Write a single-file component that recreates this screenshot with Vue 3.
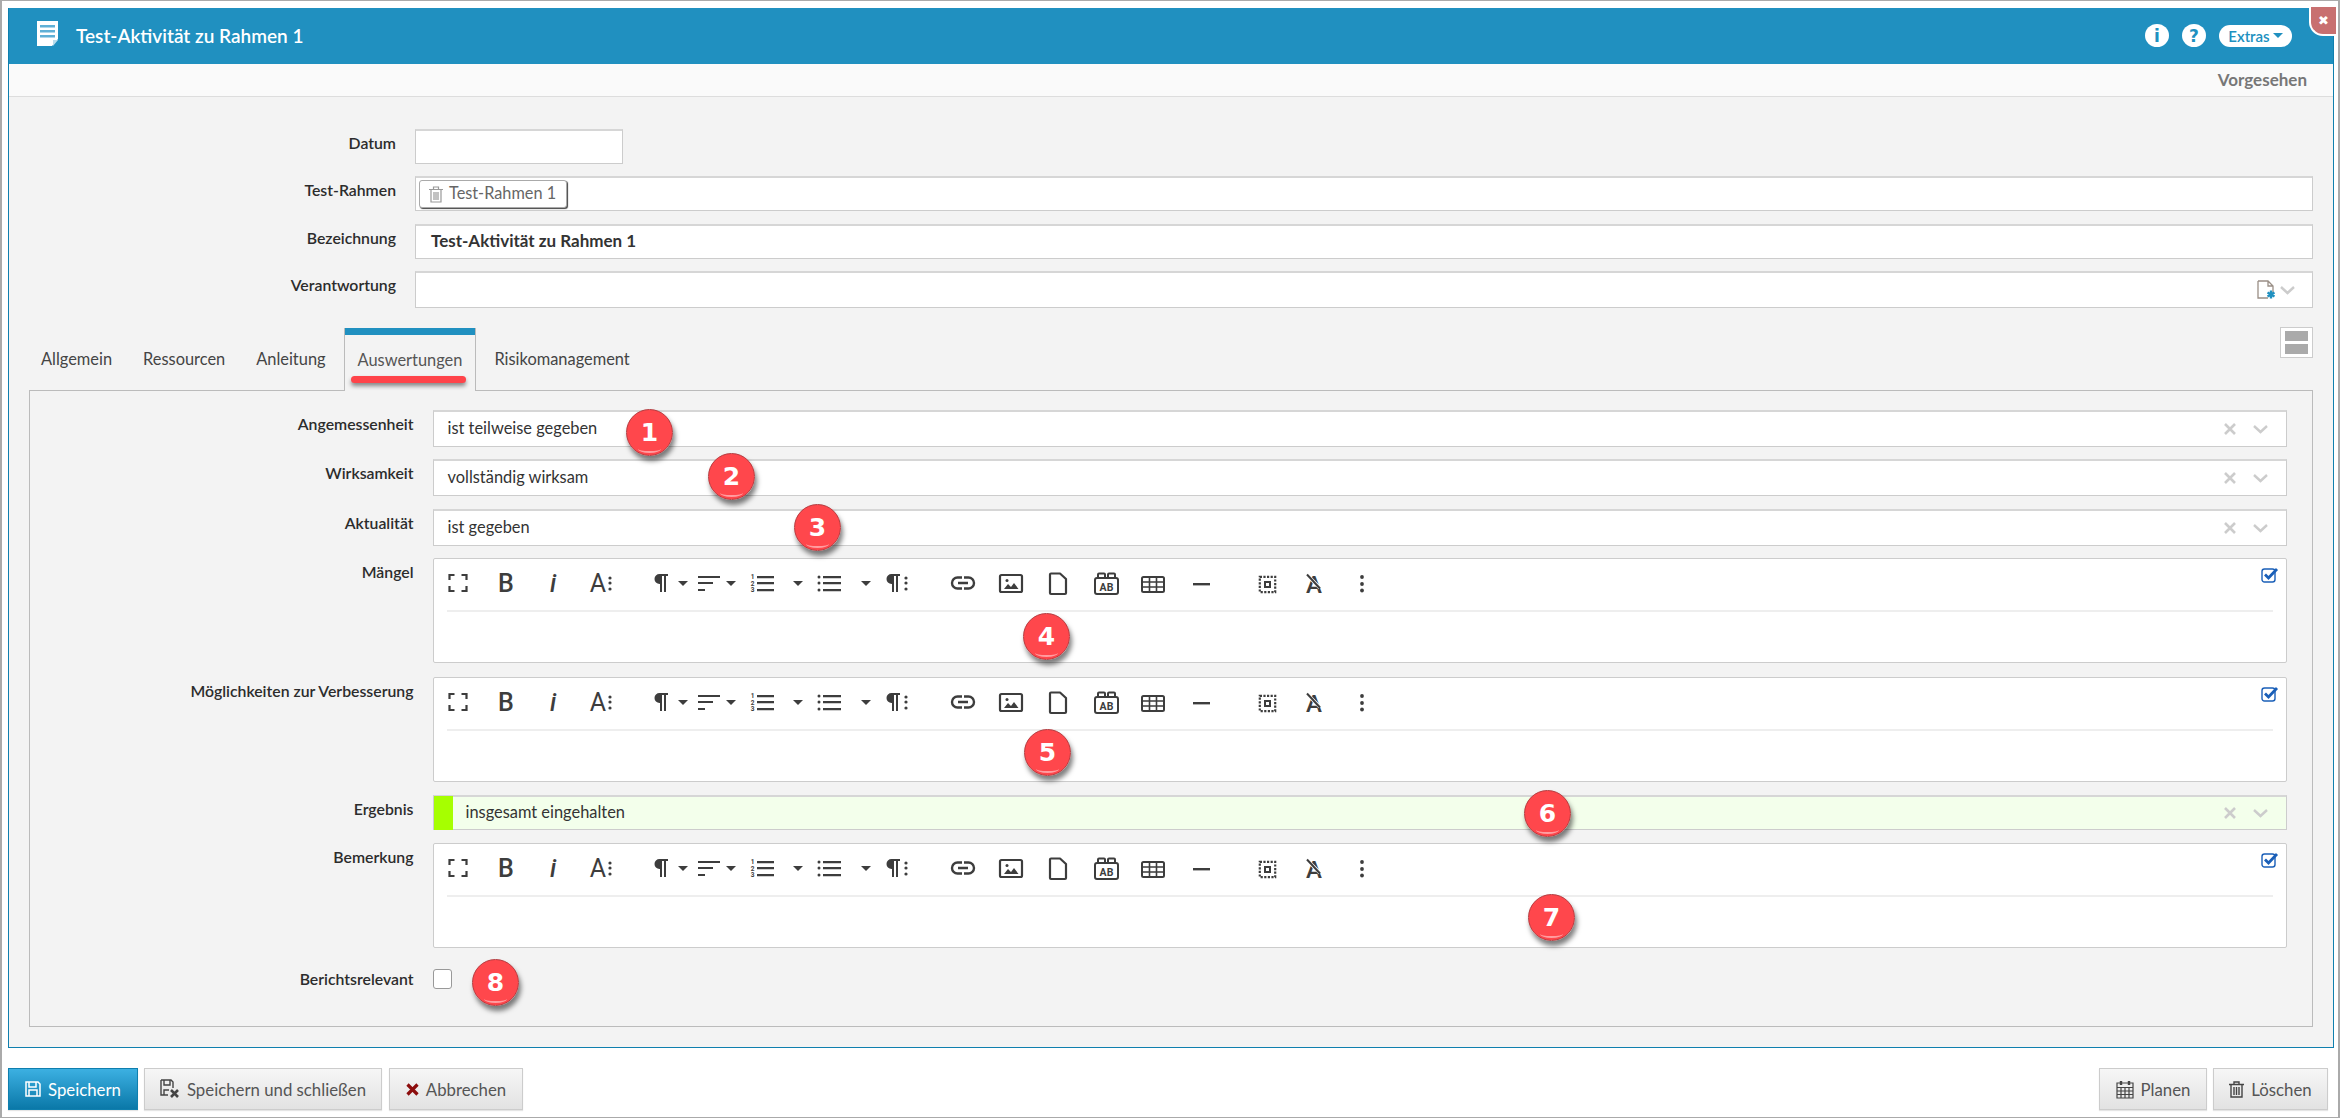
<script setup>
const A = 'font-family="Roboto, Liberation Sans, sans-serif"'
const icons = {
  full: '<path d="M3.5 9V4h5M15.5 4h5v5M20.5 15v5h-5M8.500 20h-5v-5" fill="none" stroke="#3d3d3d" stroke-width="2.200"/>',
  bold: `<text x="12" y="21" text-anchor="middle" font-size="25" font-weight="500" ${A} fill="#3d3d3d">B</text>`,
  ital: `<text x="12" y="21" text-anchor="middle" font-size="25" font-style="italic" font-weight="500" ${A} fill="#3d3d3d">i</text>`,
  size: `<text x="9" y="21" text-anchor="middle" font-size="25" ${A} fill="#3d3d3d">A</text><circle cx="21" cy="7" r="1.6" fill="#3d3d3d"/><circle cx="21" cy="12" r="1.6" fill="#3d3d3d"/><circle cx="21" cy="18" r="1.6" fill="#3d3d3d"/>`,
  para: '<path d="M10.5 3H19v2h-2v16h-2V5h-2v16h-2v-8h-.5a5 5 0 0 1 0-10z" fill="#3d3d3d"/>',
  align: '<path d="M2 5h22v2H2zM2 11h15v2H2zM2 18h7v2H2z" fill="#3d3d3d"/>',
  ol: `<path d="M7 5h17v2.200H7zM7 11h17v2.200H7zM7 18h17v2.200H7z" fill="#3d3d3d"/><text x="2.5" y="8" text-anchor="middle" font-size="6.5" font-weight="700" ${A} fill="#3d3d3d">1</text><text x="2.5" y="14.5" text-anchor="middle" font-size="6.5" font-weight="700" ${A} fill="#3d3d3d">2</text><text x="2.5" y="21" text-anchor="middle" font-size="6.5" font-weight="700" ${A} fill="#3d3d3d">3</text>`,
  ul: '<path d="M6 5h18v2.200H6zM6 11h18v2.200H6zM6 18h18v2.200H6z" fill="#3d3d3d"/><circle cx="2" cy="6" r="1.5" fill="#3d3d3d"/><circle cx="2" cy="12" r="1.5" fill="#3d3d3d"/><circle cx="2" cy="19" r="1.5" fill="#3d3d3d"/>',
  parm: '<path d="M7.5 3H16v2h-2v16h-2V5h-2v16H8v-8h-.5a5 5 0 0 1 0-10z" fill="#3d3d3d"/><circle cx="22" cy="7" r="1.6" fill="#3d3d3d"/><circle cx="22" cy="12" r="1.6" fill="#3d3d3d"/><circle cx="22" cy="18" r="1.6" fill="#3d3d3d"/>',
  link: '<path d="M11 6.500H6.500a5.500 5.500 0 0 0 0 11H11M13 6.500h4.500a5.500 5.500 0 0 1 0 11H13M7 12h10" fill="none" stroke="#3d3d3d" stroke-width="2.400"/>',
  image: '<rect x="1" y="4" width="22" height="17" rx="1.5" fill="none" stroke="#3d3d3d" stroke-width="2.200"/><circle cx="8" cy="9.500" r="1.500" fill="#3d3d3d"/><path d="M5 18l4-5 3 3 3-4 4.500 6z" fill="#3d3d3d"/>',
  file: '<path d="M5 2.500h9l6 5.500v14a1 1 0 0 1-1 1H5a1 1 0 0 1-1-1V3.500a1 1 0 0 1 1-1z" fill="none" stroke="#3d3d3d" stroke-width="2.200" stroke-linejoin="round"/>',
  ab: `<rect x="1" y="7" width="23" height="16" rx="2" fill="none" stroke="#3d3d3d" stroke-width="2"/><path d="M4 7V3.500a1 1 0 0 1 1-1h5a1 1 0 0 1 1 1V7M14 7V3.500a1 1 0 0 1 1-1h5a1 1 0 0 1 1 1V7" fill="none" stroke="#3d3d3d" stroke-width="2"/><text x="12.500" y="19.500" text-anchor="middle" font-size="10.500" font-weight="700" ${A} fill="#3d3d3d">AB</text>`,
  table: '<rect x="1" y="6" width="22" height="15" rx="1.500" fill="none" stroke="#3d3d3d" stroke-width="2"/><path d="M1 11h22M1 16h22M8.500 6v15M15.500 6v15" stroke="#3d3d3d" stroke-width="1.600"/>',
  hr: '<path d="M4 12h17v2.400H4z" fill="#3d3d3d"/>',
  sel: '<rect x="4.800" y="5.800" width="15.400" height="15.400" fill="none" stroke="#3d3d3d" stroke-width="2.200" stroke-dasharray="2.200 1.400"/><path fill-rule="evenodd" d="M9 10h7v7H9zM11 12v3h3v-3z" fill="#3d3d3d"/>',
  clear: `<text x="12" y="22" text-anchor="middle" font-size="24" font-weight="500" ${A} fill="#3d3d3d">A</text><path d="M5 4l13 13" stroke="#fff" stroke-width="3.500"/><path d="M5 3.500l13 14" stroke="#3d3d3d" stroke-width="2"/>`,
  more: '<circle cx="12" cy="6" r="1.900" fill="#3d3d3d"/><circle cx="12" cy="13" r="1.900" fill="#3d3d3d"/><circle cx="12" cy="19.500" r="1.900" fill="#3d3d3d"/>',
}
const tools = [
  { i: 'full', w: 48 }, { i: 'bold', w: 47 }, { i: 'ital', w: 48 }, { i: 'size', w: 60 },
  { i: 'para', w: 47, c: 5 }, { i: 'align', w: 54, c: 6 }, { i: 'ol', w: 67, c: 19 }, { i: 'ul', w: 67, c: 20 },
  { i: 'parm', w: 67 }, { i: 'link', w: 48 }, { i: 'image', w: 47 }, { i: 'file', w: 48 }, { i: 'ab', w: 47 },
  { i: 'table', w: 48 }, { i: 'hr', w: 66 }, { i: 'sel', w: 47 }, { i: 'clear', w: 48 }, { i: 'more', w: 24 },
]
const tabs = ['Allgemein', 'Ressourcen', 'Anleitung', 'Auswertungen', 'Risikomanagement']
const rows = [
  { label: 'Angemessenheit', type: 'select', value: 'ist teilweise gegeben' },
  { label: 'Wirksamkeit', type: 'select', value: 'vollständig wirksam' },
  { label: 'Aktualität', type: 'select', value: 'ist gegeben', extra: 'g1' },
  { label: 'Mängel', type: 'editor' },
  { label: 'Möglichkeiten zur Verbesserung', type: 'editor', extra: 'g2' },
  { label: 'Ergebnis', type: 'result', value: 'insgesamt eingehalten', extra: 'g1' },
  { label: 'Bemerkung', type: 'editor', extra: 'g1' },
]
const badges = [
  { n: 1, x: 648, y: 432 }, { n: 2, x: 730, y: 476 }, { n: 3, x: 816, y: 527 }, { n: 4, x: 1045, y: 636 },
  { n: 5, x: 1046, y: 752 }, { n: 6, x: 1546, y: 813 }, { n: 7, x: 1550, y: 917 }, { n: 8, x: 494, y: 982 },
]
</script>

<template>
  <div class="frame">
    <section class="dialog">
      <header class="head">
        <svg class="doc" width="21" height="25" viewBox="0 0 21 25">
          <path d="M0 0h21v18l-6 7H0z" fill="#fff" />
          <path d="M3 4h15v2.500H3zM3 9h15v2.500H3zM3 14h15v2.500H3z" fill="#5fb0d6" />
          <path d="M16 25v-6h5z" fill="#b8dcec" />
        </svg>
        <h1 class="title">Test-Aktivität zu Rahmen 1</h1>
        <span class="circle">i</span>
        <span class="circle">?</span>
        <span class="extras">Extras<i class="caret-blue"></i></span>
      </header>
      <div class="status"><b>Vorgesehen</b></div>
      <div class="content">
        <div class="top-form">
          <div class="row">
            <label class="lab">Datum</label>
            <div class="box date"></div>
          </div>
          <div class="row">
            <label class="lab">Test-Rahmen</label>
            <div class="box chipbox">
              <span class="chip">
                <svg width="14" height="17" viewBox="0 0 14 17" fill="none" stroke="#999" stroke-width="1.200">
                  <path d="M0 3.500h14M4.500 3V1h5v2M2 4v12h10V4M5 6v8M7 6v8M9 6v8" />
                </svg>
                <span class="chiptext">Test-Rahmen 1</span>
              </span>
            </div>
          </div>
          <div class="row g1">
            <label class="lab">Bezeichnung</label>
            <div class="box strong"><span class="val">Test-Aktivität zu Rahmen 1</span></div>
          </div>
          <div class="row">
            <label class="lab">Verantwortung</label>
            <div class="box tall">
              <svg width="19" height="20" viewBox="0 0 19 20">
                <path d="M1 1h10l5 5v7M11 1v5h5M1 1v17h10" fill="none" stroke="#9a8f86" stroke-width="1.300" />
                <path d="M14 10.500v8M10.500 12.500l7 4M17.500 12.500l-7 4" stroke="#2090c0" stroke-width="2.400" />
              </svg>
              <svg class="chev" width="15" height="9" viewBox="0 0 15 9"><path d="M1 1l6.500 6L14 1" fill="none" stroke="#ccc" stroke-width="2.400" /></svg>
            </div>
          </div>
        </div>

        <div class="tabs">
          <span v-for="t in tabs" :key="t" class="tab" :class="{ active: t === 'Auswertungen' }">
            {{ t }}
            <i v-if="t === 'Auswertungen'" class="underline"></i>
          </span>
          <span class="layout"><i></i><i></i></span>
        </div>

        <div class="panel">
          <div v-for="r in rows" :key="r.label" class="prow" :class="r.extra">
            <label class="lab">{{ r.label }}</label>
            <div v-if="r.type === 'editor'" class="editor">
              <div class="toolbar">
                <span v-for="(t, k) in tools" :key="k" class="tool" :style="{ width: t.w + 'px' }">
                  <svg width="24" height="24" viewBox="0 0 24 24" class="ti" v-html="icons[t.i]"></svg>
                  <i v-if="t.c" class="caret" :style="{ marginLeft: t.c + 'px' }"></i>
                </span>
              </div>
              <div class="sep"></div>
              <svg class="check" width="18" height="16" viewBox="0 0 18 16">
                <rect x="1" y="2" width="13" height="13" rx="2.500" fill="none" stroke="#1a5fb8" stroke-width="1.400" />
                <path d="M4 7.500l3.500 3.500L16 2" fill="none" stroke="#1a5fb8" stroke-width="2.800" />
              </svg>
            </div>
            <div v-else class="box sel" :class="{ result: r.type === 'result' }">
              <i v-if="r.type === 'result'" class="lime"></i>
              <span class="val">{{ r.value }}</span>
              <svg width="12" height="12" viewBox="0 0 12 12"><path d="M1 1l10 10M11 1L1 11" stroke="#ccc" stroke-width="2.600" /></svg>
              <svg class="chev2" width="15" height="9" viewBox="0 0 15 9"><path d="M1 1l6.500 6L14 1" fill="none" stroke="#ccc" stroke-width="2.400" /></svg>
            </div>
          </div>
          <div class="prow last">
            <label class="lab">Berichtsrelevant</label>
            <span class="cb"></span>
          </div>
        </div>
      </div>
    </section>

    <footer class="foot">
      <button class="btn primary w1">
        <svg width="16" height="16" viewBox="0 0 16 16" fill="none" stroke="#fff" stroke-width="1.500"><path d="M1 1h12l2 2v12H1zM4 1v5h7V1M4 15V9h8v6" /></svg>
        Speichern
      </button>
      <button class="btn w2">
        <svg width="20" height="20" viewBox="0 0 20 20" fill="none" stroke="#444" stroke-width="1.400"><path d="M1 1h10l2 2v6M4 1v5h6V1M1 1v15h7M4 16v-5h5" /><path d="M11 11l7 7M18 11l-7 7" stroke-width="2.600" /></svg>
        Speichern und schließen
      </button>
      <button class="btn w3">
        <svg width="13" height="13" viewBox="0 0 13 13"><path d="M1.500 1.500l10 10M11.500 1.500l-10 10" stroke="#8c0d0d" stroke-width="3.200" /></svg>
        Abbrechen
      </button>
      <button class="btn w4 push">
        <svg width="18" height="19" viewBox="0 0 18 19" fill="none" stroke="#444" stroke-width="1.200"><path d="M1 3h16v15H1zM1 7.500h16M1 11h16M1 14.500h16M5 7.500V18M9 7.500V18M13 7.500V18" /><path d="M5 1v4M13 1v4" stroke-width="2.400" /></svg>
        Planen
      </button>
      <button class="btn w5">
        <svg width="15" height="17" viewBox="0 0 15 17" fill="none" stroke="#444" stroke-width="1.400"><path d="M0 3.500h15M5 3V1h5v2M2 4v12h11V4M5 6v8M7.500 6v8M10 6v8" /></svg>
        Löschen
      </button>
    </footer>

    <span class="close">✖</span>
    <span v-for="b in badges" :key="b.n" class="badge" :style="{ left: b.x - 24 + 'px', top: b.y - 24 + 'px' }">{{ b.n }}</span>
  </div>
</template>

<style>
html, body { margin: 0; }
</style>

<style scoped>
.frame {
  position: relative;
  box-sizing: border-box;
  width: 2340px;
  height: 1118px;
  padding: 7px 4px 0 6px;
  background: #fff;
  border: 1px solid #aaa;
  border-width: 1px 2px 1px 2px;
  font-family: Lato, "Liberation Sans", sans-serif;
  color: #333;
  display: flex;
  flex-direction: column;
}
.dialog {
  box-sizing: border-box;
  height: 1040px;
  border: 1px solid #0f7fae;
  border-top: 0;
  display: flex;
  flex-direction: column;
}
.head {
  height: 56px;
  flex: none;
  background: #2090c0;
  display: flex;
  align-items: center;
  padding: 0 41px 0 28px;
  color: #fff;
}
.doc { margin-right: 18px; margin-top: -6px; }
.title { margin: 0 auto 0 0; font-size: 19px; font-weight: 600; position: relative; top: -1px; }
.circle {
  width: 24px;
  height: 23px;
  border-radius: 50%;
  background: #fff;
  color: #2090c0;
  font-weight: 900;
  font-size: 17px;
  display: flex;
  align-items: center;
  justify-content: center;
  margin: -1px 13px 0 0;
  font-family: "DejaVu Sans", sans-serif;
}
.extras {
  width: 73px;
  height: 22px;
  margin-top: -1px;
  box-sizing: border-box;
  background: #fff;
  border-radius: 11px;
  color: #2090c0;
  font-size: 15px;
  font-weight: 600;
  display: flex;
  align-items: center;
  justify-content: center;
  gap: 3px;
}
.caret-blue {
  border: 5px solid transparent;
  border-top-color: #2090c0;
  border-bottom: 0;
}
.status {
  height: 33px;
  flex: none;
  box-sizing: border-box;
  background: #fafafa;
  border-bottom: 1px solid #ddd;
  text-align: right;
  padding: 6px 26px 0 0;
  color: #777;
  font-size: 17px;
  line-height: 20px;
}
.content {
  flex: 1;
  background: #f3f3f3;
  padding: 32px 20px 20px 0;
  display: flex;
  flex-direction: column;
  min-height: 0;
}
.top-form { display: flex; flex-direction: column; gap: 12px; }
.row { display: grid; grid-template-columns: 387px 1fr; column-gap: 19px; }
.g1 { margin-top: 1px; }
.g2 { margin-top: 2px; }
.lab {
  display: block;
  text-align: right;
  font-size: 15.800px;
  font-weight: 600;
  line-height: 20px;
  padding-top: 4px;
  color: #2c2c2c;
  white-space: nowrap;
}
.box {
  box-sizing: border-box;
  height: 35px;
  background: #fff;
  border: 1px solid #ccc;
  border-top-width: 2px;
  border-top-color: #d6d6d6;
  display: flex;
  align-items: center;
  padding: 0 14px;
  font-size: 16.400px;
}
.date { width: 208px; }
.chipbox { padding: 0 3px; }
.chip {
  box-sizing: border-box;
  width: 148px;
  height: 28px;
  background: #fff;
  border: 1px solid #aaa;
  border-radius: 3px;
  box-shadow: 1px 1px 1px #444;
  display: flex;
  align-items: center;
  gap: 6px;
  padding: 0 9px;
  color: #666;
  font-size: 16.300px;
  white-space: nowrap;
}
.chiptext { margin-top: -3px; }
.strong { font-weight: 700; padding-left: 15px; font-size: 17px; }
.tall { height: 37px; justify-content: flex-end; padding-right: 17px; }
.chev { margin-left: 4px; }
.tabs {
  position: relative;
  height: 63px;
  margin: 19px 0 0 19px;
  display: flex;
  gap: 5px;
  align-items: flex-end;
  z-index: 1;
}
.tab {
  box-sizing: border-box;
  height: 40px;
  padding: 0 13px;
  font-size: 16.400px;
  line-height: 20px;
  color: #444;
  position: relative;
  white-space: nowrap;
  top: -11px;
  display: flex;
  align-items: center;
  flex: none;
}
.tab.active {
  top: 1px;
  height: 63px;
  padding: 0 13px;
  background: #f3f3f3;
  border: 1px solid #bbb;
  border-bottom: 0;
  border-top: 0;
  color: #555;
  box-shadow: inset 0 7px 0 #2090c0;
  align-items: flex-start;
  line-height: 64px;
}
.underline {
  position: absolute;
  left: 6px;
  right: 9px;
  top: 48px;
  height: 7px;
  background: #ff444a;
  border-radius: 4px;
  box-shadow: 0 3px 4px rgba(0, 0, 0, .45);
}
.layout {
  margin-left: auto;
  align-self: flex-start;
  box-sizing: border-box;
  width: 33px;
  height: 31px;
  background: #fff;
  border: 1px solid #ccc;
  padding: 3px 4px;
  display: flex;
  flex-direction: column;
  gap: 3px;
}
.layout i { display: block; flex: 1; background: #aaa; }
.panel {
  flex: 1;
  margin-left: 19.500px;
  border: 1px solid #bbb;
  padding: 19px 25px 0 0;
  display: flex;
  flex-direction: column;
  gap: 12px;
  min-height: 0;
}
.prow { display: grid; grid-template-columns: 384px 1fr; column-gap: 19px; }
.prow .box { height: 37px; }
.prow .result { height: 35px; padding-left: 0; background: #f3ffeb; }
.sel { padding-right: 18px; }
.val { margin-right: auto; margin-top: -3px; }
.chev2 { margin-left: 17px; }
.lime { width: 19px; align-self: stretch; background: #a6ff00; margin: -1px 13px -1px 0; }
.editor {
  position: relative;
  box-sizing: border-box;
  height: 105px;
  background: #fff;
  border: 1px solid #ccc;
  border-radius: 2px;
}
.toolbar { height: 51px; box-sizing: border-box; display: flex; padding: 12px 0 0 12px; }
.tool { display: flex; align-items: center; height: 24px; flex: none; }
.ti { overflow: visible; flex: none; }
.caret {
  flex: none;
  border: 5px solid transparent;
  border-top-color: #3d3d3d;
  border-bottom: 0;
}
.sep { height: 2px; margin: 0 13px; background: #eee; }
.check { position: absolute; right: 7px; top: 8px; }
.last { margin-top: 9px; align-items: start; }
.last .lab { padding-top: 0; }
.cb {
  width: 19px;
  height: 20px;
  box-sizing: border-box;
  background: #fff;
  border: 1px solid #999;
  border-radius: 3px;
}
.foot {
  display: flex;
  gap: 6px;
  padding: 20px 6px 0 0;
}
.btn {
  box-sizing: border-box;
  height: 42px;
  flex: none;
  border: 1px solid #ccc;
  background: linear-gradient(#f6f6f6, #e2e2e2);
  color: #555;
  font: 16.800px Lato, "Liberation Sans", sans-serif;
  display: flex;
  align-items: center;
  justify-content: center;
  gap: 7px;
  padding: 0;
  box-shadow: 0 1px 1px rgba(0, 0, 0, .1);
}
.primary {
  background: linear-gradient(#3cb0e2, #0a78a8);
  border-color: #0f7fae;
  color: #fff;
}
.w1 { width: 130px; }
.w2 { width: 238px; }
.w3 { width: 134px; margin-left: 1px; }
.w4 { width: 108px; }
.w5 { width: 115px; }
.push { margin-left: auto; }
.close {
  position: absolute;
  left: 2307px;
  top: 6px;
  width: 25px;
  height: 27px;
  background: #c87070;
  border: solid #fff;
  border-width: 0 0 2px 2px;
  border-bottom-left-radius: 14px;
  color: #fff;
  font-size: 13px;
  display: flex;
  align-items: center;
  justify-content: center;
  font-family: "DejaVu Sans", sans-serif;
}
.badge {
  position: absolute;
  box-sizing: border-box;
  width: 47px;
  height: 47px;
  border-radius: 50%;
  background: radial-gradient(circle at 50% 45%, #ff474c 70%, #ee3a40 100%);
  border: 1px solid #b5383c;
  box-shadow: 2px 5px 5px rgba(0, 0, 0, .5);
  color: #fff;
  font: 700 25px "DejaVu Sans", sans-serif;
  display: flex;
  align-items: center;
  justify-content: center;
  z-index: 3;
}
.badge::after {
  content: "";
  position: absolute;
  left: 11px;
  right: 11px;
  bottom: 2px;
  height: 6px;
  border-bottom: 2px solid #ff9da0;
  border-radius: 50%;
}
</style>
